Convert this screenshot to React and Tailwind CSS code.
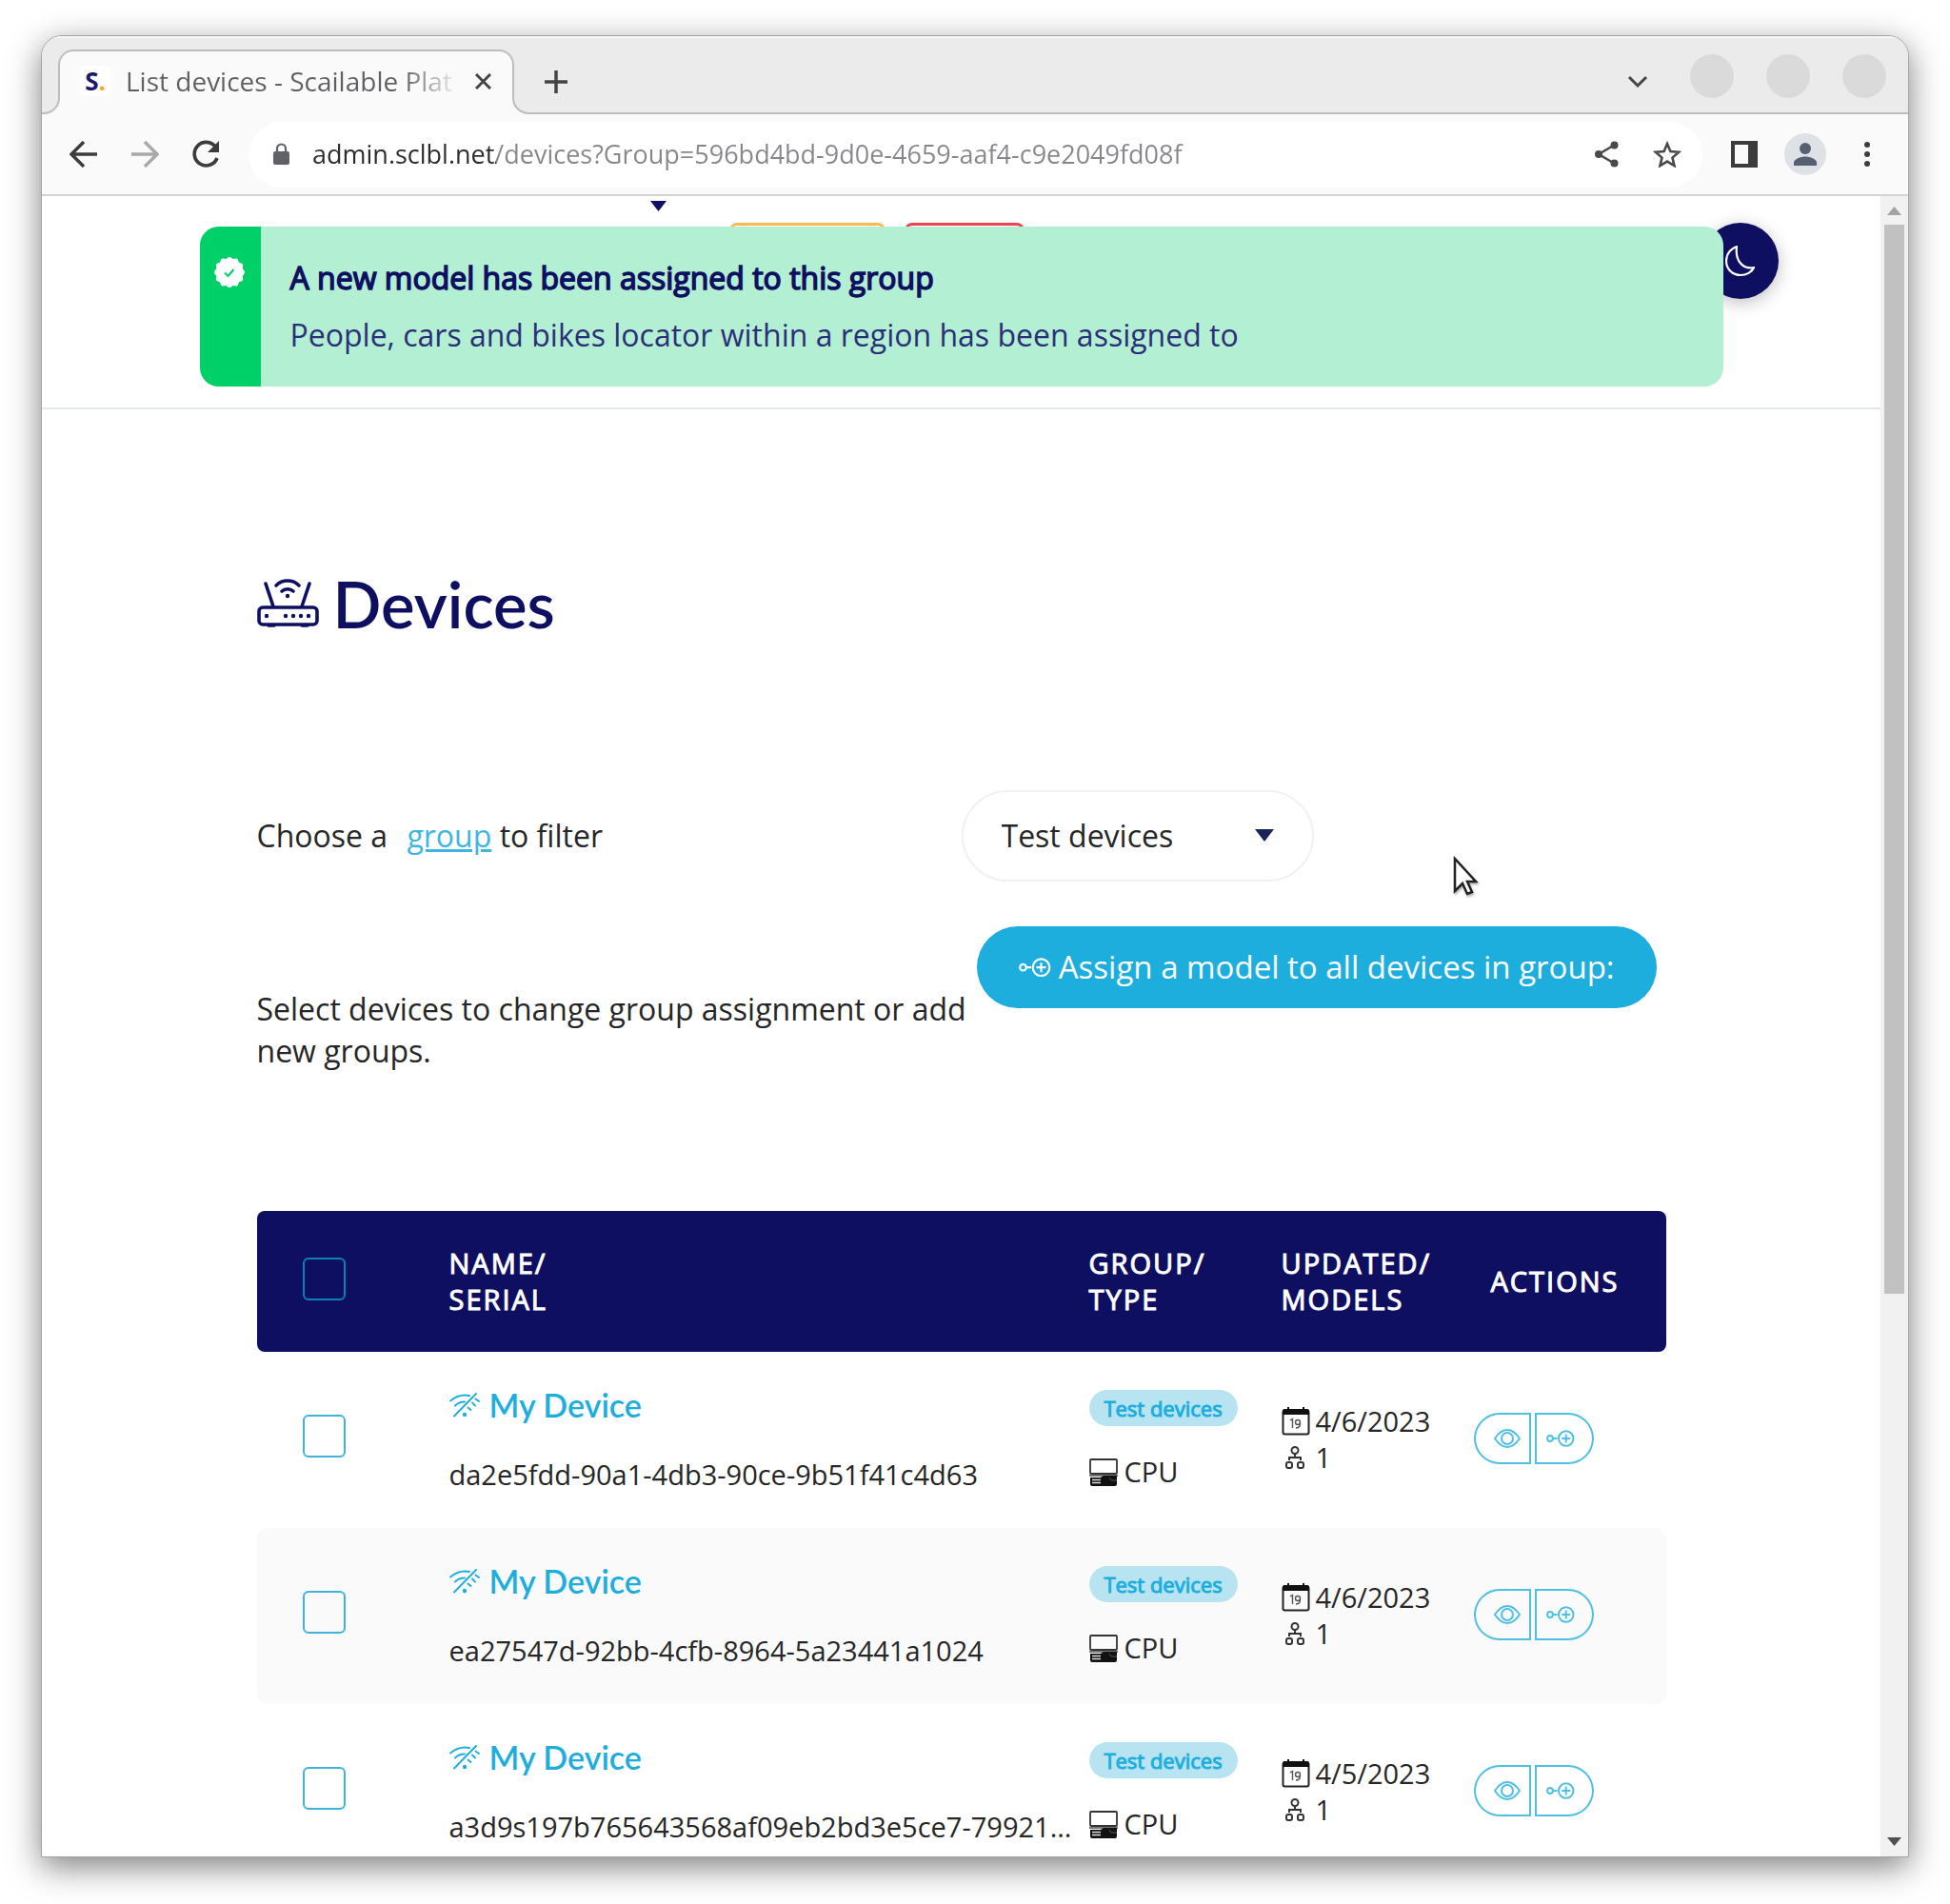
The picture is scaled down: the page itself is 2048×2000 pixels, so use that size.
import React from "react";

const devices = [
  { name: "My Device", serial: "da2e5fdd-90a1-4db3-90ce-9b51f41c4d63", group: "Test devices", type: "CPU", updated: "4/6/2023", models: 1 },
  { name: "My Device", serial: "ea27547d-92bb-4cfb-8964-5a23441a1024", group: "Test devices", type: "CPU", updated: "4/6/2023", models: 1 },
  { name: "My Device", serial: "a3d9s197b765643568af09eb2bd3e5ce7-79921...", group: "Test devices", type: "CPU", updated: "4/5/2023", models: 1 },
];

function Svg({ w, h, className = "", children, ...rest }) {
  return (
    <svg width={w} height={h} viewBox={`0 0 ${w} ${h}`} fill="none" aria-hidden="true" className={`shrink-0 ${className}`} {...rest}>
      {children}
    </svg>
  );
}

const RouterIcon = () => (
  <Svg w={66} h={52} stroke="currentColor" strokeWidth="3.6" strokeLinecap="round">
    <rect x="2" y="30" width="61" height="18" rx="4" />
    <path d="M9 5l8 24M55 5l-8 24" />
    <path d="M20 7a17 17 0 0 1 24 0M26 13a9 9 0 0 1 12 0" />
    <path d="M12 49h6M47 49h6" />
    <g fill="currentColor" stroke="none">
      <circle cx="32" cy="18" r="2.2" />
      <circle cx="10" cy="39" r="2.2" />
      <circle cx="30" cy="39" r="2.2" />
      <circle cx="38" cy="39" r="2.2" />
      <circle cx="46" cy="39" r="2.2" />
      <circle cx="54" cy="39" r="2.2" />
    </g>
  </Svg>
);

const WifiOffIcon = () => (
  <Svg w={32} h={26} stroke="currentColor" strokeWidth="1.9" strokeLinecap="round">
    <path d="M5 24.500L28 1" />
    <path d="M1 8.500C7 3.500 14 1.500 21 3M6 13.500C9 10.500 12.500 9.500 16 9.500M27.500 6.500l3.500 2.500M24 10.500l3 3M19.500 15.500l3 2.500" />
    <circle cx="16" cy="23" r="2.200" fill="currentColor" stroke="none" />
  </Svg>
);

const AssignIcon = ({ w = 34 }) => (
  <svg width={w} height={w * 0.6} viewBox="0 0 34 20" fill="none" stroke="currentColor" strokeWidth="2.2" aria-hidden="true" className="shrink-0">
    <circle cx="4.500" cy="10" r="3.300" />
    <path d="M8 10h5M23.500 5v10M18.500 10h10" />
    <circle cx="23.500" cy="10" r="8.800" />
  </svg>
);

const EyeIcon = () => (
  <Svg w={28} h={20} stroke="currentColor" strokeWidth="2">
    <path d="M1 10C5 4 9 1 14 1s9 3 13 9c-4 6-8 9-13 9S5 16 1 10z" />
    <circle cx="14" cy="10" r="6" />
  </Svg>
);

const ComputerIcon = () => (
  <Svg w={30} h={29}>
    <rect x="1" y="1" width="28" height="15" rx="1" stroke="#333" strokeWidth="1.800" />
    <path d="M0 17h30v2H0z" fill="#777" />
    <path d="M1 20h11l3-2h14v9a2 2 0 0 1-2 2H3a2 2 0 0 1-2-2z" fill="#111" />
    <path d="M3 22.500h9M3 25.500h9" stroke="#ddd" strokeWidth="1.300" />
    <path d="M21 20l2 3h6" stroke="#555" strokeWidth="1" />
  </Svg>
);

const CalendarIcon = () => (
  <Svg w={30} h={30}>
    <rect x="1.500" y="3.500" width="27" height="25" rx="2" stroke="#222" strokeWidth="2" />
    <path d="M1 8V4a2 2 0 0 1 2-2h3V0h2v2h14V0h2v2h3a2 2 0 0 1 2 2v4z" fill="#111" />
    <path d="M9 14l2.500-1.500V22M19.500 16a2.500 2.500 0 1 1-5 0 2.500 2.500 0 0 1 5 0c0 3 0 6-4.500 6" stroke="#555" strokeWidth="1.400" />
  </Svg>
);

const NetworkIcon = () => (
  <Svg w={20} h={24} stroke="#333" strokeWidth="2">
    <circle cx="10" cy="4.500" r="3.500" />
    <path d="M10 8v4M4 15v-3h12v3" />
    <rect x="1" y="17" width="6" height="6" rx="2" />
    <rect x="13" y="17" width="6" height="6" rx="2" />
  </Svg>
);

const VerifiedIcon = () => (
  <Svg w={32} h={32}>
    <path
      fill="#fff"
      d="M16 0l3.600 2.400 4.400-.4 1.700 4 4 1.700-.4 4.400L32 16l-2.700 3.900.4 4.400-4 1.700-1.700 4-4.400-.4L16 32l-3.600-2.400-4.400.4-1.700-4-4-1.700.4-4.400L0 16l2.700-3.900-.4-4.400 4-1.700L8 2l4.400.4z"
      stroke="#fff"
      strokeLinejoin="round"
      strokeWidth="1"
    />
    <path d="M11 16.500l3.500 3.500 6-7" stroke="#00d068" strokeWidth="2" />
  </Svg>
);

function Checkbox({ label, className }) {
  return (
    <input
      type="checkbox"
      aria-label={label}
      className={`block size-[45px] appearance-none rounded-md border-2 ${className}`}
    />
  );
}

function TitleBar() {
  return (
    <div className="flex h-[82px] shrink-0 items-end border-t-2 border-b-2 border-t-[#f6f6f6] border-b-[#bdbdbd] bg-[#ebebeb] pl-[17px]">
      <div className="relative -mb-[2px] flex h-[68px] w-[479px] items-center rounded-t-2xl border-2 border-b-0 border-[#bdbdbd] bg-[#fafafa] pb-1 pl-[21px]">
        <Svg w={20} h={20} className="absolute bottom-0 -left-[20px]">
          <path d="M20 0H19V3A16 16 0 0 1 3 19H0V20H20Z" fill="#fafafa" />
          <path d="M19 0V3A16 16 0 0 1 3 19H0" stroke="#bdbdbd" strokeWidth="2" />
        </Svg>
        <Svg w={20} h={20} className="absolute -right-[20px] bottom-0">
          <path d="M0 0H1V3A16 16 0 0 0 17 19H20V20H0Z" fill="#fafafa" />
          <path d="M1 0V3A16 16 0 0 0 17 19H20" stroke="#bdbdbd" strokeWidth="2" />
        </Svg>
        <span className="flex size-8 items-center justify-center rounded bg-white text-[26px] font-bold text-[#1a1a6a]">
          S<span className="text-[#ffa51f]">.</span>
        </span>
        <span className="ml-4 w-[354px] overflow-hidden bg-[linear-gradient(90deg,#5f6063_290px,#fafafa_352px)] bg-clip-text text-[28px] whitespace-nowrap text-transparent">
          List devices - Scailable Plat
        </span>
        <button type="button" aria-label="Close tab" className="ml-[13px]">
          <Svg w={17} h={17} stroke="#444" strokeWidth="3"><path d="M1 1l15 15M16 1L1 16" /></Svg>
        </button>
      </div>
      <button type="button" aria-label="New tab" className="mb-5 ml-8">
        <Svg w={24} h={24} stroke="#444" strokeWidth="3.500"><path d="M12 0v24M0 12h24" /></Svg>
      </button>
      <div className="mb-[15px] ml-auto flex items-center gap-[34px] pr-[23px]">
        <button type="button" aria-label="Search tabs" className="mt-3 mr-[10px]">
          <Svg w={22} h={14} stroke="#444" strokeWidth="3"><path d="M2 2l9 9 9-9" /></Svg>
        </button>
        <button type="button" aria-label="Minimize" className="size-[46px] rounded-full bg-[#dadada]" />
        <button type="button" aria-label="Maximize" className="size-[46px] rounded-full bg-[#dadada]" />
        <button type="button" aria-label="Close window" className="size-[46px] rounded-full bg-[#dadada]" />
      </div>
    </div>
  );
}

function Toolbar() {
  return (
    <div className="flex h-[86px] shrink-0 items-center border-b-2 border-[#d3d3d3] bg-[#fafafa] pr-[40px] pl-[29px]">
      <button type="button" aria-label="Back">
        <Svg w={29} h={28} stroke="#3c3c3c" strokeWidth="3.400"><path d="M15 1L2 14l13 13M2 14h27" /></Svg>
      </button>
      <button type="button" aria-label="Forward" className="ml-[36px]">
        <Svg w={29} h={28} stroke="#a9a9a9" strokeWidth="3.400"><path d="M14 1l13 13-13 13M27 14H0" /></Svg>
      </button>
      <button type="button" aria-label="Reload" className="ml-[34px]">
        <Svg w={30} h={30}>
          <path d="M25.500 7.500A12.300 12.300 0 1 0 27 19" stroke="#3c3c3c" strokeWidth="3.600" />
          <path d="M29 1v12H17z" fill="#3c3c3c" />
        </Svg>
      </button>
      <div className="ml-[30px] flex h-[69px] flex-1 items-center rounded-full bg-white pr-[22px] pl-[26px]">
        <Svg w={17} h={24}>
          <rect x="0" y="9" width="17" height="14" rx="2" fill="#5f6368" />
          <path d="M4 10V6a4.500 4.500 0 0 1 9 0v4" stroke="#5f6368" strokeWidth="2.200" />
        </Svg>
        <input
          type="text"
          aria-label="Address"
          defaultValue="admin.sclbl.net/devices?Group=596bd4bd-9d0e-4659-aaf4-c9e2049fd08f"
          className="ml-6 min-w-0 flex-1 bg-[linear-gradient(90deg,#2b2b2b_193px,#85878a_193px)] bg-clip-text text-[27px] text-transparent outline-none"
        />
        <button type="button" aria-label="Share" className="mr-[36px]">
          <Svg w={25} h={28} stroke="#4a4a4a" strokeWidth="2.500">
            <path d="M21 4L4 14l17 10" />
            <circle cx="20.500" cy="4.500" r="4" fill="#4a4a4a" stroke="none" />
            <circle cx="4" cy="14" r="4" fill="#4a4a4a" stroke="none" />
            <circle cx="20.500" cy="23.500" r="4" fill="#4a4a4a" stroke="none" />
          </Svg>
        </button>
        <button type="button" aria-label="Bookmark">
          <Svg w={30} h={28}>
            <path d="M15 3l3.400 8 8.800.8-6.700 5.800 2 8.500-7.500-4.500-7.500 4.500 2-8.500-6.700-5.800 8.800-.8z" stroke="#4a4a4a" strokeWidth="2.600" />
          </Svg>
        </button>
      </div>
      <button type="button" aria-label="Side panel" className="ml-[30px]">
        <Svg w={28} h={28}>
          <path fillRule="evenodd" d="M0 0h28v28H0zM4 4v20h14V4z" fill="#3c3c3c" />
        </Svg>
      </button>
      <button type="button" aria-label="Profile" className="ml-[28px] flex size-11 items-center justify-center rounded-full bg-[#dee1e6]">
        <Svg w={24} h={24} className="text-[#566073]">
          <circle cx="12" cy="6" r="6" fill="currentColor" />
          <path d="M0 24v-3c0-4 7-6.500 12-6.500S24 17 24 21v3z" fill="currentColor" />
        </Svg>
      </button>
      <button type="button" aria-label="Menu" className="ml-10">
        <Svg w={6} h={26}>
          <circle cx="3" cy="3" r="3" fill="#3c3c3c" />
          <circle cx="3" cy="13" r="3" fill="#3c3c3c" />
          <circle cx="3" cy="23" r="3" fill="#3c3c3c" />
        </Svg>
      </button>
    </div>
  );
}

function SiteHeader() {
  return (
    <header className="relative h-[224px] border-b-2 border-[#e4e7eb]">
      <div className="flex items-start pl-[639px]">
        <Svg w={18} h={12} className="mt-[5px] text-[#0f0f62]"><path d="M0 0h17l-8.500 11z" fill="currentColor" /></Svg>
        <span className="mt-[28px] ml-[65px] h-12 w-[164px] rounded-lg border-[3px] border-[#ffb84d]" />
        <span className="mt-[28px] ml-[20px] h-12 w-[126px] rounded-lg border-[3px] border-[#ef4450]" />
      </div>
      <button
        type="button"
        aria-label="Dark mode"
        className="absolute top-[28px] right-[107px] flex size-20 items-center justify-center rounded-full bg-[#0f0f62] shadow-[0_4px_18px_rgba(0,0,0,0.25)]"
      >
        <Svg w={32} h={34} stroke="#fff" strokeWidth="2.200" strokeLinejoin="round">
          <path d="M12 2C4 5 1 11 1 17c0 9 7 15 15 15 6 0 12-3 14-8C19 26 10 18 12 2z" />
        </Svg>
      </button>
      <div role="status" className="absolute inset-x-0 top-8 mx-auto flex h-[168px] max-w-[1600px] overflow-hidden rounded-[20px] bg-[#b3f0d3]">
        <div className="flex w-16 shrink-0 justify-center bg-[#00d068] pt-8 pr-[2px]">
          <VerifiedIcon />
        </div>
        <div className="pt-[24px] pl-[31px] text-[32px] leading-[60px]">
          <p className="text-[#0f0f62] [-webkit-text-stroke:1.5px_#0f0f62]">A new model has been assigned to this group</p>
          <p className="text-[#2b2f78]">People, cars and bikes locator within a region has been assigned to</p>
        </div>
      </div>
    </header>
  );
}

function DeviceRow({ device, striped }) {
  const bg = striped ? "bg-[#fafafa]" : "";
  return (
    <tr className="h-[185px] align-top">
      <td className={`rounded-l-xl pt-[66px] pl-12 ${bg}`}>
        <Checkbox label={`Select ${device.serial}`} className="border-[#3fb3da]" />
      </td>
      <td className={`pt-[34px] pl-px ${bg}`}>
        <a href="#device" className="flex items-center gap-[10px] font-['Lato'] text-[34px] leading-[44px] font-semibold text-[#1eaedd]">
          <WifiOffIcon />
          {device.name}
        </a>
        <p className="mt-[32px] leading-[38px]">{device.serial}</p>
      </td>
      <td className={`pt-[40px] ${bg}`}>
        <span className="block h-[38px] w-[156px] rounded-full bg-[#b8e4f2] text-center text-[22px] leading-[38px] text-[#1eaedd] [-webkit-text-stroke:1px_#1eaedd]">
          {device.group}
        </span>
        <p className="mt-[29px] flex items-center gap-[7px] leading-[38px]">
          <ComputerIcon />
          {device.type}
        </p>
      </td>
      <td className={`pt-[54px] leading-[38px] ${bg}`}>
        <p className="flex items-center gap-[6px]"><CalendarIcon />{device.updated}</p>
        <p className="flex items-center gap-3 pl-1"><NetworkIcon />{device.models}</p>
      </td>
      <td className={`rounded-r-xl pt-[64px] text-[#4fbfe4] ${bg}`}>
        <div className="flex gap-1">
          <button type="button" aria-label="View device" className="flex h-[54px] w-[60px] items-center justify-center rounded-l-full rounded-r-[3px] border-2 border-current pl-[10px]">
            <EyeIcon />
          </button>
          <button type="button" aria-label="Assign model" className="flex h-[54px] w-[62px] items-center justify-center rounded-l-[3px] rounded-r-full border-2 border-current pr-[8px]">
            <AssignIcon w={30} />
          </button>
        </div>
      </td>
    </tr>
  );
}

function Devices() {
  return (
    <main className="mx-auto max-w-[1480px] pt-[168px] text-[#262626]">
      <h1 className="flex items-center gap-[14px] font-['Lato'] text-[67px] leading-[72px] font-semibold text-[#0f0f62]">
        <RouterIcon />
        Devices
      </h1>

      <div className="mt-[160px] grid grid-cols-2 items-center text-[32px]">
        <label htmlFor="group-filter">
          Choose a <a href="#group" className="ml-3 text-[#3fb6df] underline">group</a> to filter
        </label>
        <div className="relative w-[370px]">
          <select id="group-filter" defaultValue="test" className="h-24 w-full appearance-none rounded-[48px] border-2 border-[#f1f1f1] bg-white pl-[40px]">
            <option value="test">Test devices</option>
          </select>
          <Svg w={22} h={13} className="pointer-events-none absolute top-[41px] right-[41px]"><path d="M1 0h20L11 13z" fill="#1a2456" /></Svg>
        </div>
      </div>

      <div className="mt-[47px] flex items-start justify-between pr-[10px]">
        <p className="w-[750px] pt-[65px] text-[32px] leading-[44px]">Select devices to change group assignment or add new groups.</p>
        <button type="button" className="flex h-[86px] items-center gap-2 rounded-[43px] bg-[#1eaedd] px-11 text-[33px] leading-[44px] whitespace-nowrap text-white">
          <AssignIcon />
          Assign a model to all devices in group:
        </button>
      </div>

      <table className="mt-[146px] w-full table-fixed border-separate border-spacing-0 text-left text-[29px]">
        <colgroup>
          <col className="w-[201px]" />
          <col />
          <col className="w-[202px]" />
          <col className="w-[202px]" />
          <col className="w-[202px]" />
        </colgroup>
        <thead>
          <tr className="h-[148px] text-[29px] leading-[38px] tracking-[2px] text-white [-webkit-text-stroke:1px_#fff]">
            <th className="rounded-l-lg bg-[#0f0f62] pb-[5px] pl-12"><Checkbox label="Select all devices" className="border-[#0b81b4]" /></th>
            <th className="bg-[#0f0f62] pl-px font-normal">NAME/<br />SERIAL</th>
            <th className="bg-[#0f0f62] font-normal">GROUP/<br />TYPE</th>
            <th className="bg-[#0f0f62] font-normal">UPDATED/<br />MODELS</th>
            <th className="rounded-r-lg bg-[#0f0f62] pl-[18px] font-normal">ACTIONS</th>
          </tr>
        </thead>
        <tbody>
          {devices.map((device, i) => (
            <DeviceRow key={device.serial} device={device} striped={i % 2 === 1} />
          ))}
        </tbody>
      </table>
    </main>
  );
}

export default function App() {
  return (
    <div className="flex h-screen flex-col overflow-hidden bg-white px-[43px] pt-[37px] pb-[49px] font-['Open_Sans',sans-serif]">
      <div className="flex min-h-0 flex-1 flex-col overflow-hidden rounded-t-[22px] border border-[#a3a3a3] bg-white shadow-[0_10px_34px_rgba(0,0,0,0.5)]">
        <TitleBar />
        <Toolbar />
        <div className="flex min-h-0 flex-1">
          <div className="min-w-0 flex-1 overflow-hidden">
            <SiteHeader />
            <Devices />
          </div>
          <div className="flex w-[29px] shrink-0 flex-col items-center bg-[#f1f1f1] py-[11px]">
            <Svg w={15} h={9}><path d="M0 9L7.500 0 15 9z" fill="#a3a3a3" /></Svg>
            <div className="my-[10px] w-full flex-1 px-1">
              <div className="h-2/3 bg-[#c1c1c1]" />
            </div>
            <Svg w={15} h={9}><path d="M0 0h15L7.500 9z" fill="#505050" /></Svg>
          </div>
        </div>
      </div>

      {/* Mouse pointer */}
      <Svg w={28} h={44} className="pointer-events-none absolute top-[899px] left-[1526px] drop-shadow-[1px_2px_1px_rgba(0,0,0,0.3)]">
        <path d="M2 3v34l8-8 5 11 5-2-5-11h9z" fill="#fff" stroke="#222" strokeWidth="2.500" />
      </Svg>
    </div>
  );
}
